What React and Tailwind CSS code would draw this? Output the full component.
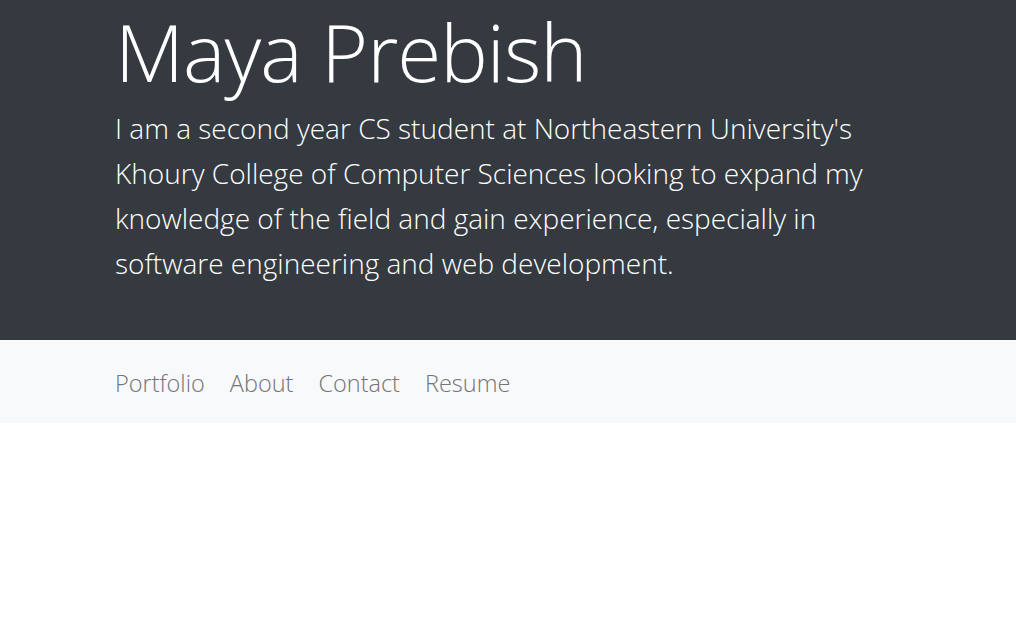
export default function App() {
    const links = ["Portfolio", "About", "Contact", "Resume"];

    return (
        <div className="min-h-screen bg-white" style={{ fontFamily: '"Open Sans", "Noto Sans", sans-serif' }}>
            <header className="bg-[#343a40] h-[340px] pt-[1px]">
                <div className="w-[786px] mx-auto">
                    <h1 className="text-[80px] font-light leading-[110px] text-white tracking-[-1px] -mt-[5px]">
                        Maya Prebish
                    </h1>
                    <p className="text-[28px] font-light leading-[45px] text-white">
                        I am a second year CS student at Northeastern University's Khoury College of Computer Sciences looking to expand my knowledge of the field and gain experience, especially in software engineering and web development.
                    </p>
                </div>
            </header>
            <nav className="bg-[#f8f9fa] h-[83px] flex items-center">
                <div className="w-[786px] mx-auto flex gap-[25px] pt-[4px]">
                    {links.map((link) => (
                        <a key={link} href="#" className="text-[23.5px] font-light text-[#737475]">
                            {link}
                        </a>
                    ))}
                </div>
            </nav>
        </div>
    );
}
